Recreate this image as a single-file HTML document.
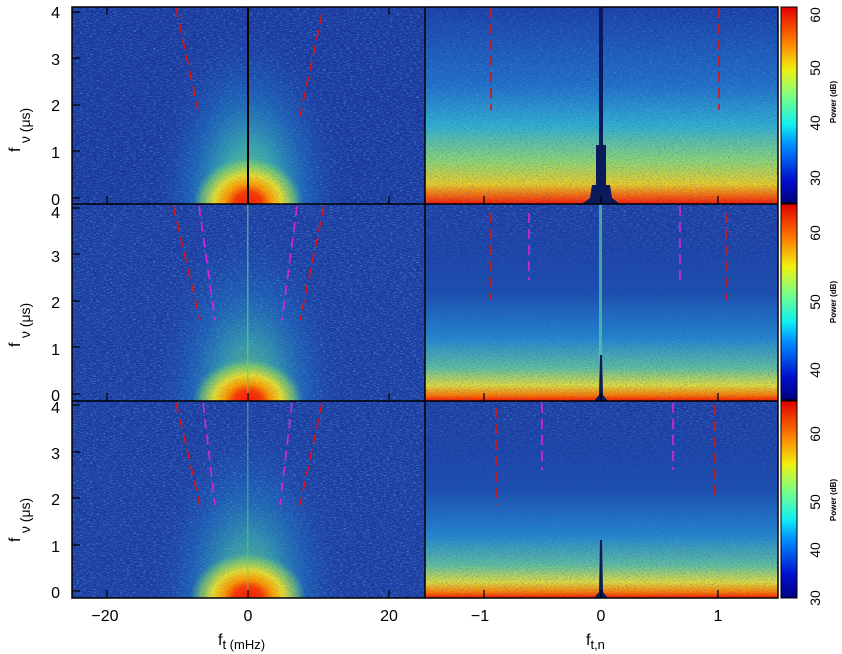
<!DOCTYPE html>
<html><head><style>
html,body{margin:0;padding:0;background:#fff;}
svg{display:block;font-family:"Liberation Sans",Arial,sans-serif;}
</style></head><body>
<svg width="842" height="654" viewBox="0 0 842 654" xmlns="http://www.w3.org/2000/svg">
<defs>
<filter id="nz" x="0" y="0" width="100%" height="100%">
<feTurbulence type="fractalNoise" baseFrequency="0.3 1.2" numOctaves="2" seed="3"/>
<feColorMatrix values="0 0 0 0 0.15  0 0 0 0 0.65  0 0 0 0 0.95  0 0 0 2.2 -1.15"/>
</filter>
<filter id="nzd" x="0" y="0" width="100%" height="100%">
<feTurbulence type="fractalNoise" baseFrequency="0.5 1.3" numOctaves="2" seed="11"/>
<feColorMatrix values="0 0 0 0 0.02  0 0 0 0 0.06  0 0 0 0 0.35  0 0 0 2.2 -1.0"/>
</filter>
<filter id="nz2" x="0" y="0" width="100%" height="100%">
<feTurbulence type="fractalNoise" baseFrequency="0.9" numOctaves="1" seed="7"/>
<feColorMatrix values="0 0 0 0 0.15  0 0 0 0 0.65  0 0 0 0 0.95  0 0 0 2.2 -1.15"/>
</filter>
<radialGradient id="outer" cx="0.5" cy="1" r="1" fx="0.5" fy="1" gradientTransform="translate(0.5 1) scale(0.3 1) translate(-0.5 -1)">
<stop offset="0" stop-color="#90e060" stop-opacity="1"/>
<stop offset="0.3" stop-color="#40c0b0" stop-opacity="0.8"/>
<stop offset="0.55" stop-color="#2090d0" stop-opacity="0.45"/>
<stop offset="0.8" stop-color="#2060c0" stop-opacity="0.15"/>
<stop offset="1" stop-color="#1a3aa0" stop-opacity="0"/>
</radialGradient>
<radialGradient id="inner" cx="0.5" cy="1" r="0.5" fx="0.5" fy="1">
<stop offset="0" stop-color="#ff1a00"/>
<stop offset="0.25" stop-color="#ff3a00"/>
<stop offset="0.42" stop-color="#ffa000"/>
<stop offset="0.62" stop-color="#e8e030"/>
<stop offset="0.85" stop-color="#a0e050" stop-opacity="0.5"/>
<stop offset="1" stop-color="#60d080" stop-opacity="0"/>
</radialGradient>
<linearGradient id="band1" x1="0" y1="1" x2="0" y2="0">
<stop offset="0" stop-color="#ff1500"/>
<stop offset="0.04" stop-color="#ff6000"/>
<stop offset="0.1" stop-color="#f0d020"/>
<stop offset="0.22" stop-color="#90d870"/>
<stop offset="0.4" stop-color="#30b0d0"/>
<stop offset="0.6" stop-color="#2070c8"/>
<stop offset="1" stop-color="#1a3ea6"/>
</linearGradient>
<linearGradient id="band2" x1="0" y1="1" x2="0" y2="0">
<stop offset="0" stop-color="#ff1500"/>
<stop offset="0.03" stop-color="#ff8000"/>
<stop offset="0.08" stop-color="#e0e040"/>
<stop offset="0.17" stop-color="#60c0a0"/>
<stop offset="0.32" stop-color="#2488d0"/>
<stop offset="0.55" stop-color="#1c50b0"/>
<stop offset="1" stop-color="#1a3ea6" stop-opacity="0"/>
</linearGradient>
<linearGradient id="jet" x1="0" y1="1" x2="0" y2="0">
<stop offset="0" stop-color="#00007f"/>
<stop offset="0.12" stop-color="#0010d0"/>
<stop offset="0.3" stop-color="#0090ff"/>
<stop offset="0.4" stop-color="#10f0f0"/>
<stop offset="0.55" stop-color="#80ff80"/>
<stop offset="0.68" stop-color="#f0f010"/>
<stop offset="0.82" stop-color="#ff8000"/>
<stop offset="1" stop-color="#e00000"/>
</linearGradient>
</defs>

<!-- backgrounds -->
<rect x="72" y="7" width="706" height="591" fill="#1a38a0"/>
<rect x="72" y="7" width="706" height="591" filter="url(#nzd)" opacity="0.8"/>
<rect x="72" y="7" width="706" height="591" filter="url(#nz)" opacity="0.7"/>
<rect x="72" y="204" width="706" height="394" filter="url(#nz2)" opacity="0.4"/>

<!-- left cones -->
<rect x="72" y="7" width="353" height="197" fill="url(#outer)"/>
<rect x="193" y="110" width="110" height="94" fill="url(#inner)"/>
<rect x="72" y="204" width="353" height="197" fill="url(#outer)" opacity="0.85"/>
<rect x="193" y="317" width="110" height="84" fill="url(#inner)"/>
<rect x="72" y="401" width="353" height="197" fill="url(#outer)" opacity="0.85"/>
<rect x="190" y="508" width="116" height="90" fill="url(#inner)"/>
<rect x="72" y="7" width="353" height="591" filter="url(#nzd)" opacity="0.35"/>

<!-- right bands -->
<rect x="425" y="7" width="353" height="197" fill="url(#band1)"/>
<rect x="425" y="204" width="353" height="197" fill="url(#band2)"/>
<rect x="425" y="401" width="353" height="197" fill="url(#band2)"/>
<rect x="425" y="7" width="353" height="591" filter="url(#nzd)" opacity="0.5"/>
<rect x="425" y="7" width="353" height="197" filter="url(#nz)" opacity="0.4"/>

<!-- center spikes -->
<path d="M599 7 L603 7 L603 145 L606 145 L606 185 L610 185 L612 198 L620 204 L582 204 L590 198 L592 185 L596 185 L596 145 L599 145 Z" fill="#0a1a5a"/>
<rect x="599" y="204" width="3" height="197" fill="#50d0a0" opacity="0.7"/>
<path d="M600 355 L602 355 L603 395 L608 401 L594 401 L599 395 Z" fill="#0a1a5a"/>
<path d="M600 540 L602 540 L603 592 L608 598 L594 598 L599 592 Z" fill="#0a1a5a"/>
<rect x="247" y="7" width="2" height="197" fill="#000"/>
<rect x="247" y="204" width="1.5" height="197" fill="#60d070" opacity="0.7"/>
<rect x="247" y="401" width="1.5" height="197" fill="#60d070" opacity="0.5"/>

<!-- dashed curves -->
<g fill="none" stroke-width="1.6" stroke-dasharray="10 6">
<path d="M176 8 L198 110" stroke="#e01010"/>
<path d="M322 14 L300 116" stroke="#e01010"/>
<path d="M173 206 L200 320" stroke="#e01010"/>
<path d="M199 206 L215 320" stroke="#e020e0"/>
<path d="M297 206 L282 320" stroke="#e020e0"/>
<path d="M324 206 L300 320" stroke="#e01010"/>
<path d="M176 403 L200 505" stroke="#e01010"/>
<path d="M203 403 L215 505" stroke="#e020e0"/>
<path d="M292 403 L280 505" stroke="#e020e0"/>
<path d="M322 403 L300 505" stroke="#e01010"/>
<path d="M491 8 L491 110" stroke="#e01010"/>
<path d="M719 8 L719 110" stroke="#e01010"/>
<path d="M491 213 L491 300" stroke="#e01010"/>
<path d="M529 213 L529 280" stroke="#e020e0"/>
<path d="M680 206 L680 282" stroke="#e020e0"/>
<path d="M726 213 L726 300" stroke="#e01010"/>
<path d="M496 408 L496 505" stroke="#e01010"/>
<path d="M542 403 L542 470" stroke="#e020e0"/>
<path d="M673 403 L673 470" stroke="#e020e0"/>
<path d="M715 405 L715 500" stroke="#e01010"/>
</g>

<!-- frames -->
<g fill="none" stroke="#000" stroke-width="1.5">
<rect x="72" y="7" width="706" height="591"/>
<line x1="72" y1="204" x2="778" y2="204"/>
<line x1="72" y1="401" x2="778" y2="401"/>
<line x1="425" y1="7" x2="425" y2="598"/>
</g>
<!-- ticks -->
<g stroke="#000" stroke-width="1.2">
<path d="M107 598v-8M248 598v-8M389 598v-8M107 401v-8M248 401v-8M389 401v-8M107 204v-8M248 204v-8M389 204v-8M107 7v8M248 7v8M389 7v8"/>
<path d="M484 598v-8M601 598v-8M718 598v-8M484 401v-8M601 401v-8M718 401v-8M484 204v-8M601 204v-8M718 204v-8"/>
<path d="M72 591h8M72 545h8M72 498h8M72 452h8M72 405h8M72 394h8M72 347h8M72 301h8M72 254h8M72 208h8M72 198h8M72 151h8M72 105h8M72 58h8M72 12h8"/>
</g>

<!-- colorbars -->
<g stroke="#000" stroke-width="1">
<rect x="781" y="7" width="16" height="196" fill="url(#jet)"/>
<rect x="781" y="204" width="16" height="196" fill="url(#jet)"/>
<rect x="781" y="401" width="16" height="197" fill="url(#jet)"/>
</g>

<!-- y labels -->
<g font-size="16" text-anchor="end" fill="#000">
<text x="60" y="18">4</text><text x="60" y="65">3</text><text x="60" y="111">2</text><text x="60" y="158">1</text><text x="60" y="205">0</text>
<text x="60" y="218">4</text><text x="60" y="262">3</text><text x="60" y="308">2</text><text x="60" y="355">1</text><text x="60" y="401">0</text>
<text x="60" y="413">4</text><text x="60" y="459">3</text><text x="60" y="505">2</text><text x="60" y="552">1</text><text x="60" y="598">0</text>
</g>
<g font-size="16" fill="#000">
<text transform="translate(20,152) rotate(-90)">f <tspan font-size="14" dy="10">ν (μs)</tspan></text>
<text transform="translate(20,347) rotate(-90)">f <tspan font-size="14" dy="10">ν (μs)</tspan></text>
<text transform="translate(20,542) rotate(-90)">f <tspan font-size="14" dy="10">ν (μs)</tspan></text>
</g>
<!-- x labels -->
<g font-size="16" text-anchor="middle" fill="#000">
<text x="105" y="621">−20</text><text x="248" y="621">0</text><text x="389" y="621">20</text>
<text x="480" y="621">−1</text><text x="601" y="621">0</text><text x="718" y="621">1</text>
</g>
<text x="218" y="645" font-size="16">f<tspan font-size="13" dy="4">t (mHz)</tspan></text>
<text x="586" y="645" font-size="16">f<tspan font-size="13" dy="4">t,n</tspan></text>

<!-- colorbar labels -->
<g font-size="14" fill="#000" text-anchor="middle">
<text transform="translate(820,178) rotate(-90)">30</text>
<text transform="translate(820,123) rotate(-90)">40</text>
<text transform="translate(820,68) rotate(-90)">50</text>
<text transform="translate(820,15) rotate(-90)">60</text>
<text transform="translate(820,370) rotate(-90)">40</text>
<text transform="translate(820,302) rotate(-90)">50</text>
<text transform="translate(820,233) rotate(-90)">60</text>
<text transform="translate(820,598) rotate(-90)">30</text>
<text transform="translate(820,550) rotate(-90)">40</text>
<text transform="translate(820,502) rotate(-90)">50</text>
<text transform="translate(820,434) rotate(-90)">60</text>
</g>
<g font-size="8" font-weight="bold" fill="#000" text-anchor="middle">
<text transform="translate(836,102) rotate(-90)">Power (dB)</text>
<text transform="translate(836,302) rotate(-90)">Power (dB)</text>
<text transform="translate(836,500) rotate(-90)">Power (dB)</text>
</g>
</svg>
</body></html>
